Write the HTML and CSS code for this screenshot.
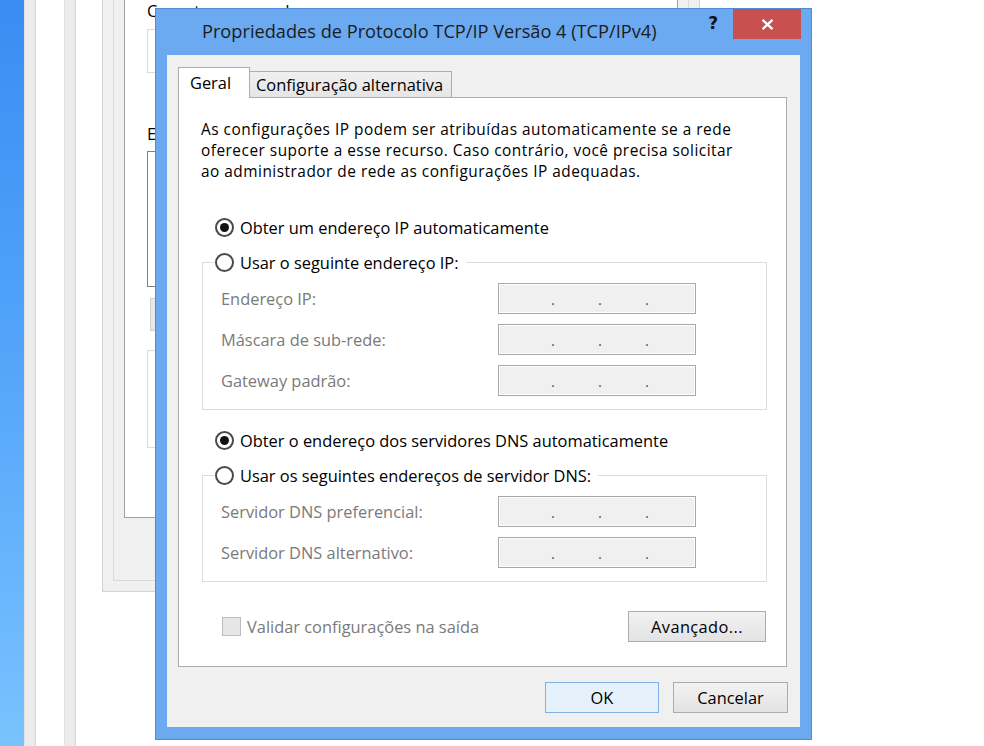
FILE: index.html
```html
<!DOCTYPE html>
<html lang="pt-BR">
<head>
<meta charset="utf-8">
<title>Propriedades de Protocolo TCP/IP Versão 4 (TCP/IPv4)</title>
<link rel="stylesheet" href="styles.css">
</head>
<body>
<div class="desk-blue"></div>
<div class="strip strip-a"></div>
<div class="strip strip-b"></div>

<div class="bg-window">
  <div class="bg-tab">
    <div class="bg-page">
      <div class="bg-label">Conectar-se usando:</div>
      <div class="bg-input"></div>
      <div class="bg-label bg-label-2">Esta conexão utiliza os seguintes itens:</div>
      <div class="bg-list"></div>
      <div class="bg-btn"></div>
      <div class="bg-group"></div>
    </div>
  </div>
</div>

<div class="dialog">
  <div class="titlebar">
    <div class="title">Propriedades de Protocolo TCP/IP Versão 4 (TCP/IPv4)</div>
    <div class="help">?</div>
    <div class="close"><svg width="13" height="11" viewBox="0 0 13 11"><path d="M1.5 0.8L11.5 10.2M11.5 0.8L1.5 10.2" stroke="#fff" stroke-width="2.3" fill="none"/></svg></div>
  </div>
  <div class="client">
    <div class="tabs">
      <div class="tab active">Geral</div>
      <div class="tab inactive">Configuração alternativa</div>
    </div>
    <div class="panel">
      <p class="desc"><span class="dline">As configurações IP podem ser atribuídas automaticamente se a rede</span><span class="dline">oferecer suporte a esse recurso. Caso contrário, você precisa solicitar</span><span class="dline">ao administrador de rede as configurações IP adequadas.</span></p>

      <div class="radio-row first"><span class="radio checked"></span>Obter um endereço IP automaticamente</div>

      <div class="group">
        <div class="legend"><span class="radio"></span>Usar o seguinte endereço IP:</div>
        <div class="field-row"><span class="flabel">Endereço IP:</span><span class="ip"><span class="seg s1"></span>.<span class="seg"></span>.<span class="seg"></span>.</span></div>
        <div class="field-row"><span class="flabel">Máscara de sub-rede:</span><span class="ip"><span class="seg s1"></span>.<span class="seg"></span>.<span class="seg"></span>.</span></div>
        <div class="field-row"><span class="flabel">Gateway padrão:</span><span class="ip"><span class="seg s1"></span>.<span class="seg"></span>.<span class="seg"></span>.</span></div>
      </div>

      <div class="radio-row second"><span class="radio checked"></span>Obter o endereço dos servidores DNS automaticamente</div>

      <div class="group">
        <div class="legend"><span class="radio"></span>Usar os seguintes endereços de servidor DNS:</div>
        <div class="field-row"><span class="flabel">Servidor DNS preferencial:</span><span class="ip"><span class="seg s1"></span>.<span class="seg"></span>.<span class="seg"></span>.</span></div>
        <div class="field-row"><span class="flabel">Servidor DNS alternativo:</span><span class="ip"><span class="seg s1"></span>.<span class="seg"></span>.<span class="seg"></span>.</span></div>
      </div>

      <div class="check-row">
        <div class="check-label"><span class="checkbox"></span>Validar configurações na saída</div>
        <div class="btn adv">Avançado...</div>
      </div>
    </div>
    <div class="buttons">
      <div class="btn ok">OK</div>
      <div class="btn cancel">Cancelar</div>
    </div>
  </div>
</div>
</body>
</html>
```

FILE: styles.css
```css
* { box-sizing: border-box; }
html, body { margin: 0; padding: 0; }
body {
  width: 984px;
  height: 746px;
  overflow: hidden;
  position: relative;
  background: #ffffff;
  font-family: "Open Sans", "Noto Sans", "DejaVu Sans", sans-serif;
  font-size: 16.4px;
  color: #000;
}

/* desktop background */
.desk-blue {
  position: absolute; left: 0; top: 0; width: 24px; height: 746px;
  background: linear-gradient(180deg, #3a8cf3 0%, #55a6fa 50%, #79c2ff 100%);
}
.strip {
  position: absolute; top: 0; width: 12px; height: 746px;
  background: #ebebeb;
  border-left: 1px solid #e2e2e2;
  border-right: 1px solid #d6d6d6;
}
.strip-a { left: 24px; }
.strip-b { left: 64px; }

/* window behind (mostly covered by the dialog) */
.bg-window {
  position: absolute; left: 102px; top: -20px; width: 598px; height: 612px;
  background: #f0f0f0;
  border: 1px solid #d4d4d4;
  padding: 0 10px 10px;
}
.bg-tab {
  height: 100%;
  border: 1px solid #d9d9d9;
  padding: 0 10px;
}
.bg-page {
  height: 536px;
  background: #fff;
  border: 1px solid #a0a0a0;
  padding: 0 22px;
}
.bg-label { margin-top: 17px; line-height: 22px; color: #000; white-space: nowrap; }
.bg-label-2 { margin-top: 50px; }
.bg-input { margin-top: 7px; height: 44px; border: 1px solid #dadada; }
.bg-list { margin-top: 6px; height: 136px; border: 1px solid #828282; }
.bg-btn { margin-top: 11px; margin-left: 3px; width: 100px; height: 33px; border: 1px solid #cfcfcf; background: #e8e8e8; }
.bg-group { margin-top: 19px; height: 98px; border: 1px solid #dcdcdc; }

/* dialog */
.dialog {
  position: absolute; left: 155px; top: 8px; width: 657px; height: 732px;
  background: #6ba9f1;
  border: 1px solid #4f8cd6;
  padding: 0 11px 12px;
  display: flex; flex-direction: column;
}
.titlebar {
  height: 46px;
  flex: none;
  display: flex; align-items: center;
  padding-left: 35px;
}
.title { flex: 1; font-size: 18.2px; color: #1c1c1c; white-space: nowrap; margin-top: -2px; }
.help {
  align-self: flex-start;
  line-height: 28px; font-size: 17px; font-weight: 700; color: #111;
  margin-right: 15px;
  font-family: "DejaVu Sans", sans-serif;
}
.close {
  align-self: flex-start;
  width: 68px; height: 30px;
  margin-right: -1px;
  background: #c8504f;
  display: flex; align-items: center; justify-content: center;
}

.client {
  flex: 1;
  background: #f0f0f0;
  padding: 12px 13px 0 11px;
  display: flex; flex-direction: column;
}
.tabs {
  height: 30px; flex: none;
  display: flex; align-items: flex-end;
  position: relative; z-index: 1;
}
.tab {
  border: 1px solid #adadad;
  border-bottom: none;
  white-space: nowrap;
}
.tab.active {
  width: 72px; height: 31px; margin-bottom: -1px;
  background: #fff;
  padding-left: 11px;
  line-height: 29px;
}
.tab.inactive {
  width: 202px; height: 26px;
  border-left: none;
  background: linear-gradient(180deg, #f0f0f0, #e5e5e5);
  padding-left: 6px;
  line-height: 25px;
}

.panel {
  height: 570px; flex: none;
  background: #fff;
  border: 1px solid #adadad;
  padding: 21px 20px 0 22px;
}
.desc { margin: 0; color: #000; white-space: nowrap; font-size: 15.4px; letter-spacing: 0.5px; }
.dline { display: block; height: 21px; line-height: 21px; }

.radio-row, .legend {
  display: flex; align-items: center;
  height: 24px; gap: 6px;
  white-space: nowrap;
}
.radio-row { margin-left: 14px; }
.radio-row.first { margin-top: 33px; }
.radio-row.second { margin-top: 18px; }
.radio {
  width: 19px; height: 19px; flex: none;
  border-radius: 50%;
  border: 2px solid #4a4a4a;
  background: #fff;
  display: flex; align-items: center; justify-content: center;
}
.radio.checked::after {
  content: "";
  width: 9px; height: 9px; border-radius: 50%;
  background: #111;
}

.group {
  margin-top: 23px;
  margin-left: 1px;
  width: 565px;
  border: 1px solid #dcdcdc;
  padding: 0 0 13px 18px;
}
.legend {
  width: fit-content;
  margin-top: -13px;
  margin-left: -7px;
  padding: 0 7px 0 1px;
  background: #fff;
}
.field-row {
  display: flex; align-items: center;
  height: 31px;
  margin-top: 10px;
}
.legend + .field-row { margin-top: 9px; }
.flabel { width: 277px; color: #7a7a7a; white-space: nowrap; }
.ip {
  width: 198px; height: 31px;
  border: 1px solid #a8a8a8;
  background: #f0f0f0;
  box-shadow: inset 0 0 0 1px #fff;
  display: flex; align-items: center;
  color: #555;
  font-size: 15px;
  padding-top: 1px;
}
.seg { width: 43px; flex: none; }
.seg.s1 { width: 52px; }

.check-row {
  margin-top: 29px;
  height: 31px;
  display: flex; align-items: center; justify-content: space-between;
}
.check-label {
  display: flex; align-items: center; gap: 6px;
  margin-left: 21px;
  color: #7a7a7a;
}
.checkbox {
  width: 19px; height: 19px;
  border: 1px solid #bcbcbc;
  background: #e6e6e6;
}

.btn {
  height: 31px;
  border: 1px solid #acacac;
  background: linear-gradient(180deg, #f2f2f2, #e3e3e3);
  display: flex; align-items: center; justify-content: center;
  color: #000;
}
.btn.adv { width: 138px; letter-spacing: 0.4px; }
.buttons {
  margin-top: 15px;
  display: flex; justify-content: flex-end; gap: 14px;
  margin-right: -1px;
}
.btn.ok {
  width: 114px;
  background: #e5f1fb;
  border-color: #7eb2e4;
}
.btn.cancel { width: 115px; }
```
